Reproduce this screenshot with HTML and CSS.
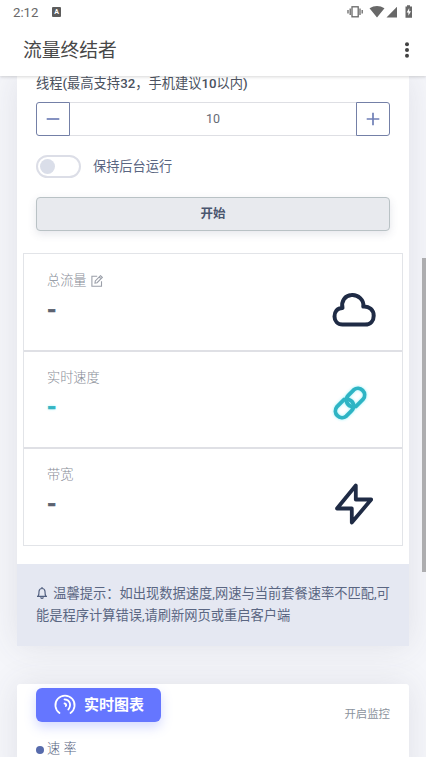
FILE: index.html
```html
<!DOCTYPE html>
<html lang="zh-CN">
<head>
<meta charset="utf-8">
<title>流量终结者</title>
<link rel="stylesheet" href="styles.css">
</head>
<body>
<div class="screen">
  <header class="top">
    <div class="status">
      <span class="clock">2:12</span>
      <span class="badge-a">A</span>
      <svg class="status-icons" width="66" height="14" viewBox="0 0 66 14">
        <g fill="none" stroke="#686868" stroke-width="1.3"><rect x="5" y="1.8" width="6.2" height="10"/><path d="M3.2 3.6v6.4M1 5v3.6M13 3.6v6.4M15.2 5v3.6"/></g>
        <path fill="#686868" d="M22.500 3.300Q30-1.300 37.500 3.300L30 12.500ZM50 1.800V12.500H39.500ZM58.500 1.500H60V.300H63V1.500H65V12.800H58.500Z"/>
        <path fill="#fff" d="M62.200 3 59.700 7.500H61.400V10.800L64 6.300H62.200Z"/>
      </svg>
    </div>
    <div class="appbar">
      <h1>流量终结者</h1>
      <svg width="6" height="18" viewBox="0 0 6 18" fill="#424242"><circle cx="3" cy="3.200" r="2"/><circle cx="3" cy="9" r="2"/><circle cx="3" cy="14.800" r="2"/></svg>
    </div>
  </header>
  <main class="page">
    <section class="card">
      <div class="form">
        <div class="label">线程<b>(</b>最高支持<b>32</b>，手机建议<b>10</b>以内<b>)</b></div>
        <div class="stepper">
          <div class="step minus"><svg width="14" height="14" viewBox="0 0 14 14"><path d="M.7 7h12.600"/></svg></div>
          <div class="value">10</div>
          <div class="step plus"><svg width="14" height="14" viewBox="0 0 14 14"><path d="M.7 7h12.600M7 .7v12.600"/></svg></div>
        </div>
        <div class="switch-row"><span class="switch"></span><span>保持后台运行</span></div>
        <div class="start">开始</div>
      </div>
      <div class="stats">
        <div class="stat">
          <div>
            <div class="name">总流量
              <svg width="12" height="12" viewBox="0 0 12 12" fill="none" stroke="#9b9fa9" stroke-width="1.100"><path d="M6.200 1.300H.9V11.200H10.500V6.300M4 8.100 4.300 5.900 9.500.7 11.300 2.400 6.100 7.700ZM8.200 2 10 3.700"/></svg>
            </div>
            <div class="num">-</div>
          </div>
          <svg class="icon cloud" width="44" height="36" viewBox="0 0 44 36"><path d="M10.500 32.500H33C39 32.500 41.700 28.300 41.700 23.700C41.700 18 37.300 14.200 31.300 14.600C32.300 8 26 2.500 19.500 3.100C13 3.500 9 9 10.500 16C5 16 2.500 20 2.500 24.500C2.500 29 5.500 32.500 10.500 32.500Z"/></svg>
        </div>
        <div class="stat live">
          <div>
            <div class="name">实时速度</div>
            <div class="num">-</div>
          </div>
          <svg class="icon link" width="36" height="36" viewBox="0 0 36 36"><path d="M24 21.400 31.200 14.200A6.700 6.700 0 0 0 21.800 4.800L16.300 10.300A6.700 6.700 0 0 0 18.800 21.300"/><path d="M12 14.600 4.800 21.800A6.700 6.700 0 0 0 14.200 31.200L19.700 25.700A6.700 6.700 0 0 0 17.200 14.700"/></svg>
        </div>
        <div class="stat">
          <div>
            <div class="name">带宽</div>
            <div class="num">-</div>
          </div>
          <svg class="icon bolt" width="40" height="44" viewBox="0 0 40 44"><path d="M21.800 3.500V17.500H37.200L17.800 40.500V26.500H3Z"/></svg>
        </div>
      </div>
      <div class="tip"><svg width="12" height="12" viewBox="0 0 12 12" fill="none" stroke="#526080" stroke-width="1.200"><path d="M1 9.300H11M2.200 9.200Q3 8 3 4.500Q3.200 1.500 6 1.500T9 4.500Q9 8 9.800 9.200M6 0V1.500M4.500 10.300Q6 12.300 7.500 10.300"/></svg><span> 温馨提示：如出现数据速度,网速与当前套餐速率不匹配,可<br>能是程序计算错误,请刷新网页或重启客户端</span></div>
    </section>
    <section class="card chart">
      <div class="chart-head">
        <div class="chart-title">
          <svg width="22" height="22" viewBox="0 0 22 22" fill="none" stroke="#fff" stroke-width="1.800" stroke-linecap="round"><path d="M5.500 19A9.600 9.600 0 1 1 16.500 19"/><path d="M10.500 5.300C15.500 5.500 18 10.500 14.300 15.500M10.500 9.500C12.300 9.800 12.600 11 11.800 12"/></svg>
          <span>实时图表</span>
        </div>
        <span class="monitor">开启监控</span>
      </div>
      <div class="legend"><i></i><span>速 率</span></div>
    </section>
  </main>
  <div class="scrollbar"></div>
</div>
</body>
</html>
```
FILE: styles.css
```css
* { box-sizing: border-box; }
body {
  margin: 0;
  font-family: Roboto, "Noto Sans CJK SC", sans-serif;
  font-size: 13.2px;
  color: #5a6682;
  font-weight: 400;
}
svg { display: block; flex: none; }
.screen {
  position: relative;
  width: 426px;
  height: 757px;
  overflow: hidden;
  background: #f5f6fa;
  display: flex;
  flex-direction: column;
}
.top {
  position: relative;
  z-index: 2;
  flex: none;
  height: 76px;
  background: #fff;
  box-shadow: 0 1px 3px rgba(0, 0, 0, .16);
}
.status {
  display: flex;
  align-items: center;
  height: 24px;
  padding: 0 13px;
  color: #686868;
}
.clock { font-size: 13.2px; width: 39px; }
.badge-a {
  width: 9px;
  height: 10px;
  border-radius: 1px;
  background: #5c5c5c;
  color: #fff;
  font-size: 7px;
  font-weight: 700;
  line-height: 10px;
  text-align: center;
}
.status-icons { margin-left: auto; }
.appbar {
  display: flex;
  align-items: center;
  justify-content: space-between;
  height: 51px;
  padding: 0 16px 0 23px;
}
h1 { margin: 2px 0 0; font-size: 18.8px; font-weight: 400; line-height: 28px; color: #484848; }
.page { flex: 1; min-height: 0; padding: 0 17px; }
.card { background: #fff; box-shadow: 0 0 32px rgba(70, 75, 95, .12); }
.form { padding: 0 19px; height: 177px; }
.label { height: 26px; line-height: 15px; font-size: 13.25px; color: #4b5260; white-space: nowrap; }
.label b { font-weight: 500; }
.stepper { display: flex; height: 34px; }
.step {
  width: 34px;
  border: 1px solid #7480a7;
  display: flex;
  align-items: center;
  justify-content: center;
}
.step path { stroke: #6f7fb6; stroke-width: 1.7; }
.minus { border-radius: 3px 0 0 3px; }
.plus { border-radius: 0 3px 3px 0; }
.value {
  flex: 1;
  border: solid #dedfe4;
  border-width: 1px 0;
  text-align: center;
  line-height: 32px;
  font-size: 12.5px;
  color: #666b75;
}
.switch-row { display: flex; align-items: center; gap: 12px; height: 23px; margin: 19px 0; line-height: 23px; }
.switch { width: 45px; height: 23px; border: 2px solid #dcdee7; border-radius: 12px; padding: 2px; }
.switch::before { content: ""; display: block; width: 15px; height: 15px; border-radius: 50%; background: #dadee9; }
.start {
  height: 34px;
  border: 1px solid #b9c2c5;
  border-radius: 4px;
  background: #e8eaee;
  box-shadow: 0 3px 9px rgba(70, 80, 110, .14);
  text-align: center;
  line-height: 31px;
  font-size: 12.5px;
  font-weight: 700;
  color: #4a566e;
}
.stats { margin: 0 6px 18px; border: 1px solid #e2e4e8; height: 293px; }
.stat {
  display: flex;
  justify-content: space-between;
  height: 97px;
  padding: 16px 25px 0 23px;
  border-bottom: 2px solid #dfe0e5;
}
.stat:first-child { height: 98px; padding-top: 17px; }
.stat:last-child { height: 96px; border-bottom: 0; }
.name { display: flex; align-items: center; gap: 4px; height: 20px; line-height: 20px; color: #888d97; font-weight: 300; }
.num {
  margin-top: 6px;
  height: 26px;
  line-height: 26px;
  font-size: 24px;
  font-weight: 700;
  color: #5c6270;
  -webkit-text-stroke: .6px;
}
.live .num { color: #35b5c3; text-shadow: 0 0 3px rgba(0, 220, 240, .4); }
.icon { fill: none; stroke: #1f2b45; stroke-width: 4; stroke-linecap: round; stroke-linejoin: round; }
.cloud { margin: 21px 1px 0 0; }
.link { margin: 17px 9px 0 0; stroke: #2eb4c4; stroke-width: 3.8; filter: drop-shadow(0 0 1.5px rgba(0, 220, 240, .4)); }
.bolt { margin: 17px 3px 0 0; stroke-width: 3.8; }
.tip {
  height: 82px;
  padding: 19px 19px;
  background: #e5e8f2;
  color: #5a6682;
  line-height: 22px;
  font-size: 13.25px;
  white-space: nowrap;
}
.tip svg { display: inline-block; vertical-align: -1px; margin-right: 2px; }
.chart { margin-top: 38px; height: 100px; padding: 4px 19px 0; border-radius: 3px; }
.chart-head { display: flex; justify-content: space-between; height: 34px; }
.chart-title {
  display: flex;
  align-items: center;
  gap: 8px;
  width: 125px;
  height: 34px;
  padding-left: 18px;
  border-radius: 6px;
  background: #6576ff;
  box-shadow: 0 5px 12px rgba(101, 118, 255, .28);
  color: #fff;
  font-size: 15px;
  font-weight: 700;
  line-height: 32px;
}
.monitor { margin-top: 16px; font-size: 11.4px; line-height: 20px; color: #8b939d; }
.legend { display: flex; align-items: center; gap: 3px; margin-top: 18px; height: 20px; }
.legend i { flex: none; width: 8px; height: 8px; border-radius: 50%; background: #576bac; }
.legend span { line-height: 16px; margin-top: -2px; font-weight: 300; }
.scrollbar { position: absolute; z-index: 1; right: 0; top: 258px; width: 4px; height: 314px; background: #adadaf; }
```
